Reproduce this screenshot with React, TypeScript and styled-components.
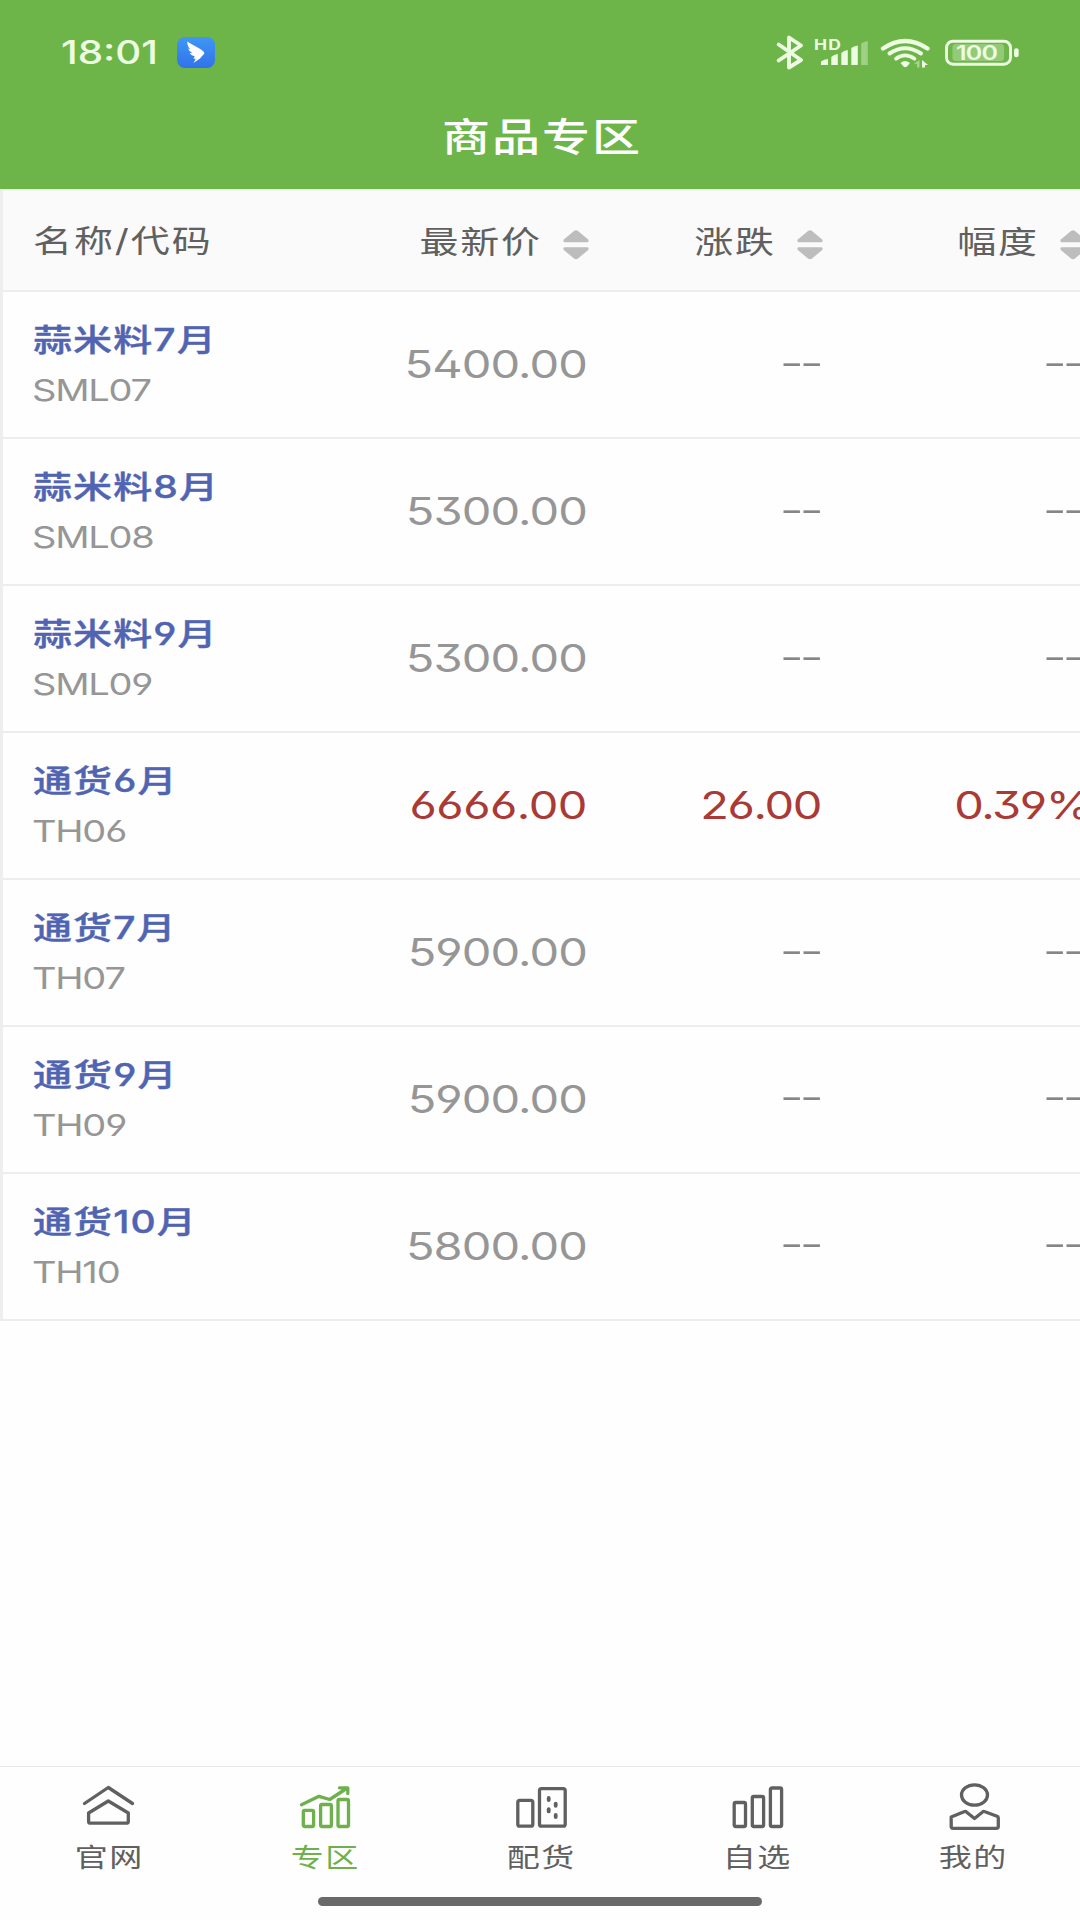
import React from "react";
import styled, { createGlobalStyle } from "styled-components";

const GlobalStyle = createGlobalStyle`
  * { box-sizing: border-box; }
  body {
    margin: 0;
    background: #fefefe;
    font-family: "Inter", "Noto Sans CJK SC", sans-serif;
    font-feature-settings: "ss01", "cv09";
  }
`;

const Screen = styled.div`
  width: 1080px;
  height: 1920px;
  display: flex;
  flex-direction: column;
  overflow: hidden;
  background: #fefefe;
`;

/* Wide lettering: glyphs keep their advance and lose a fifth of their height. */
const Wide = styled.span<{ $size: number; $weight?: number; $color?: string; $gap?: number; $shift?: number }>`
  display: block;
  flex: none;
  white-space: nowrap;
  line-height: 1;
  font-size: ${(p) => p.$size}px;
  font-weight: ${(p) => p.$weight ?? 400};
  color: ${(p) => p.$color ?? "#606060"};
  letter-spacing: ${(p) => p.$gap ?? 0}px;
  margin-right: ${(p) => -(p.$gap ?? 0)}px;
  transform: translateY(${(p) => p.$shift ?? 0}px) scaleY(0.8);
`;

const GoodsName = styled(Wide)`
  -webkit-text-stroke: 0.5px currentColor;
`;

const GoodsCode = styled(Wide)`
  margin-left: -1px;
`;

const TopArea = styled.header`
  flex: none;
  height: 189px;
  background: #6db549;
  display: flex;
  flex-direction: column;
`;

const StatusBar = styled.div`
  height: 105px;
  padding: 0 61px 0 61px;
  display: flex;
  align-items: center;
  justify-content: space-between;
`;

const StatusGroup = styled.div`
  display: flex;
  align-items: center;
  gap: 19px;
`;

const TitleBar = styled.div`
  height: 64px;
  padding-left: 2px;
  display: flex;
  align-items: center;
  justify-content: center;
`;

const Table = styled.main`
  flex: none;
  border-left: 3px solid #eeeeee;
  overflow: hidden;
`;

const Row = styled.div<{ $head?: boolean }>`
  display: grid;
  grid-template-columns: 300px 286px 234px 263px;
  width: 1083px;
  height: ${(p) => (p.$head ? 103 : 147)}px;
  align-items: center;
  padding-top: ${(p) => (p.$head ? 9 : 0)}px;
  background: ${(p) => (p.$head ? "#fafafa" : "#fefefe")};
  border-top: ${(p) => (p.$head ? "2px solid #f0f3ee" : "0")};
  border-bottom: 2px solid #ededed;
`;

const NameCell = styled.div`
  padding-left: 30px;
  display: flex;
  flex-direction: column;
  gap: 11px;
`;

const ValueCell = styled.div`
  display: flex;
  justify-content: flex-end;
  align-items: center;
  gap: 23px;
`;

const Figure = styled(Wide)<{ $end?: number }>`
  margin-right: ${(p) => p.$end ?? 2}px;
`;

const NoValue = styled(Wide)`
  margin-right: 3.6px;
`;

const TabBar = styled.nav`
  flex: none;
  margin-top: auto;
  height: 154px;
  border-top: 1px solid #e8e8e8;
  display: flex;
  flex-direction: column;
  align-items: center;
`;

const Tabs = styled.div`
  width: 100%;
  height: 130px;
  display: grid;
  grid-template-columns: repeat(5, 1fr);
`;

const Tab = styled.div<{ $active?: boolean }>`
  color: ${(p) => (p.$active ? "#6db04c" : "#606060")};
  padding-top: 14px;
  display: flex;
  flex-direction: column;
  align-items: center;
  gap: 8px;
`;

const TabLabel = styled(Wide)`
  padding-left: 1px;
`;

const HomeIndicator = styled.div`
  width: 444px;
  height: 9px;
  border-radius: 5px;
  background: #696969;
`;

const TabSvg = styled.svg`
  width: 56px;
  height: 52px;
  fill: none;
  stroke: currentColor;
  stroke-width: 3.3;
  stroke-linecap: round;
  stroke-linejoin: round;
`;

const PALE = "#ecfbe2";

const AppBadge = () => (
  <svg width="38" height="31" viewBox="0 0 38 31">
    <defs>
      <linearGradient id="badge" x1="0" y1="0" x2="0" y2="1">
        <stop offset="0" stopColor="#3f97f4" />
        <stop offset="1" stopColor="#3172ea" />
      </linearGradient>
    </defs>
    <rect width="38" height="31" rx="8" fill="url(#badge)" />
    <path
      d="M10.300 4.500C14 7.500 20 9.500 24 12.500Q27.700 15 27.300 16.500L23 21.500L16.500 26L18.700 21.700L16.300 21.500L17.800 19.500Q14 18.500 12.500 16L15.500 16.200Q12 14.500 11 11.500L13.500 12.500Q10 9 10.300 4.500Z"
      fill="#fff"
    />
  </svg>
);

const StatusIcons = () => (
  <svg width="243" height="36" viewBox="776 35 243 36">
    <g fill="none" stroke={PALE} strokeLinecap="round" strokeLinejoin="round">
      <path d="M778.700 44.500L801 60L789 67.500V37.500L801 45.500L778.700 60.500" strokeWidth="3.900" />
      <path d="M883 48.500Q905 33.500 927.500 48.500" strokeWidth="4.300" />
      <path d="M889.500 53.500Q905 43 921 53.500" strokeWidth="4" />
      <path d="M896 58.700Q905 52 914.500 58.700" strokeWidth="3.800" />
      <rect x="946.500" y="41.200" width="64" height="23" rx="6.500" strokeWidth="2.900" />
    </g>
    <g fill={PALE}>
      <path d="M821 65V61.500Q824 59 828 59V65Z" />
      <path d="M831.300 65V57Q833.500 54.500 837.800 54V65Z" />
      <path d="M841.300 65V53Q843.500 50.500 847.800 50V65Z" />
      <path d="M851.300 65V48Q853.500 46 857.800 45.500V65Z" />
      <path d="M861.200 65V43.500Q863.500 41.500 867.800 41V65Z" opacity="0.4" />
      <path d="M900.500 63Q905 59 910 63L907 66.500Q905 68 903.500 66.500Z" />
      <path d="M914 63.500L919.500 60V67.500H917V64Z" opacity="0.45" />
      <path d="M922 60L928 65H925V67.500H922Z" />
      <rect x="952.500" y="44" width="51.500" height="17" rx="3" opacity="0.3" />
      <rect x="1014" y="48.300" width="4.700" height="9" rx="2.200" />
      <g transform="scale(1 0.8)" fontFamily="Inter, sans-serif">
        <text x="814" y="62.300" fontSize="17.500" fontWeight="700" textLength="27">HD</text>
        <text x="956" y="75.300" fontSize="25" fontWeight="600" textLength="42">100</text>
      </g>
    </g>
  </svg>
);

const SortArrows = () => (
  <svg width="26" height="30" viewBox="0 0 26 30" fill="#bdbdbd">
    <path d="M11 1.100Q13 -0.500 15 1.100L25.200 9.500Q26.500 12.300 24 12.300H2Q-0.500 12.300 0.800 9.500Z" />
    <path d="M11 28.500Q13 30.100 15 28.500L25.200 20Q26.500 17.200 24 17.200H2Q-0.500 17.200 0.800 20Z" />
  </svg>
);

const icons: Record<string, React.ReactNode> = {
  home: (
    <TabSvg viewBox="0 0 56 52">
      <path d="M4.500 22.500L28.300 6.500L52.500 22.500" />
      <path d="M28.300 20L8.600 32V40.500Q8.600 42.200 10.600 42.200H46.300Q48.300 42.200 48.300 40.500V32Z" />
    </TabSvg>
  ),
  zone: (
    <TabSvg viewBox="0 0 56 52">
      <path d="M5.500 23.800L23 15.300L33.700 18.500L50.500 7.500M43.500 6.800H51.800V12.500" />
      <rect x="7.300" y="29.300" width="10.300" height="16.200" rx="1.500" />
      <rect x="24.600" y="23.500" width="10.800" height="22" rx="1.500" />
      <rect x="42" y="18.500" width="10.500" height="27" rx="1.500" />
    </TabSvg>
  ),
  stock: (
    <TabSvg viewBox="0 0 56 52">
      <rect x="5.800" y="19.400" width="15" height="25.800" rx="2" />
      <rect x="27.500" y="7.600" width="25.700" height="37.600" rx="2" />
      <g fill="currentColor" stroke="none">
        <rect x="34.800" y="15" width="3.800" height="6" rx="1.900" />
        <rect x="41.800" y="20.700" width="3.800" height="6" rx="1.900" />
        <rect x="34.800" y="26.300" width="3.800" height="6" rx="1.900" />
        <rect x="41.800" y="32" width="3.800" height="6" rx="1.900" />
      </g>
    </TabSvg>
  ),
  watch: (
    <TabSvg viewBox="0 0 56 52">
      <rect x="6.200" y="21.500" width="11.300" height="24" rx="1.500" />
      <rect x="24.300" y="15.500" width="11.300" height="30" rx="1.500" />
      <rect x="42.400" y="7" width="11.200" height="38.500" rx="1.500" />
    </TabSvg>
  ),
  me: (
    <TabSvg viewBox="0 0 56 52">
      <ellipse cx="30.500" cy="14" rx="13" ry="10.200" />
      <path d="M7.200 36L20 30.700Q21.500 30 22.700 31.200L30.500 37.500L38.300 31.200Q39.500 30 41 30.700L53 35.200Q54.300 35.600 54.300 37V45.500Q54.300 47.300 52.300 47.300H9.200Q7.200 47.300 7.200 45.500Z" />
    </TabSvg>
  ),
};

const tabs = [
  { icon: "home", label: "官网" },
  { icon: "zone", label: "专区", active: true },
  { icon: "stock", label: "配货" },
  { icon: "watch", label: "自选" },
  { icon: "me", label: "我的" },
];

const goods = [
  { name: "蒜米料7月", code: "SML07", price: "5400.00" },
  { name: "蒜米料8月", code: "SML08", price: "5300.00" },
  { name: "蒜米料9月", code: "SML09", price: "5300.00" },
  { name: "通货6月", code: "TH06", price: "6666.00", change: "26.00", rate: "0.39%" },
  { name: "通货7月", code: "TH07", price: "5900.00" },
  { name: "通货9月", code: "TH09", price: "5900.00" },
  { name: "通货10月", code: "TH10", price: "5800.00" },
];

const Value = ({ text, up, gap, end }: { text?: string; up?: boolean; gap?: number; end?: number }) => (
  <ValueCell>
    {text ? (
      <Figure $size={47} $gap={gap ?? -1.4} $end={end} $shift={-0.3} $color={up ? "#a93a35" : "#969696"}>
        {text}
      </Figure>
    ) : (
      <NoValue $size={54} $gap={-4.5} $weight={300} $shift={-2.7} $color="#868686">
        --
      </NoValue>
    )}
  </ValueCell>
);

export default function App() {
  return (
    <Screen>
      <GlobalStyle />
      <TopArea>
        <StatusBar>
          <StatusGroup>
            <Wide $size={40.3} $weight={500} $color={PALE} $shift={0.5}>18:01</Wide>
            <AppBadge />
          </StatusGroup>
          <StatusIcons />
        </StatusBar>
        <TitleBar>
          <Wide $size={48} $gap={2} $shift={0.5} $weight={500} $color="#fff">商品专区</Wide>
        </TitleBar>
      </TopArea>
      <Table>
        <Row $head>
          <NameCell>
            <Wide $size={39} $gap={1.9} $shift={-5.5}>名称/代码</Wide>
          </NameCell>
          {["最新价", "涨跌", "幅度"].map((label) => (
            <ValueCell key={label}>
              <Wide $size={39} $gap={1.7} $shift={-3.7}>{label}</Wide>
              <SortArrows />
            </ValueCell>
          ))}
        </Row>
        {goods.map((g) => (
          <Row key={g.code}>
            <NameCell>
              <GoodsName $size={39} $gap={1.1} $weight={500} $color="#5064b2" $shift={-1.2}>{g.name}</GoodsName>
              <GoodsCode $size={38} $color="#969696" $gap={-1.2}>{g.code}</GoodsCode>
            </NameCell>
            <Value text={g.price} up={!!g.change} gap={g.change ? -0.5 : -0.9} />
            <Value text={g.change} up={!!g.change} />
            <Value text={g.rate} up={!!g.change} end={-4.5} />
          </Row>
        ))}
      </Table>
      <TabBar>
        <Tabs>
          {tabs.map((t) => (
            <Tab key={t.icon} $active={t.active}>
              {icons[t.icon]}
              <TabLabel $size={33} $gap={1.5} $color="inherit">{t.label}</TabLabel>
            </Tab>
          ))}
        </Tabs>
        <HomeIndicator />
      </TabBar>
    </Screen>
  );
}
